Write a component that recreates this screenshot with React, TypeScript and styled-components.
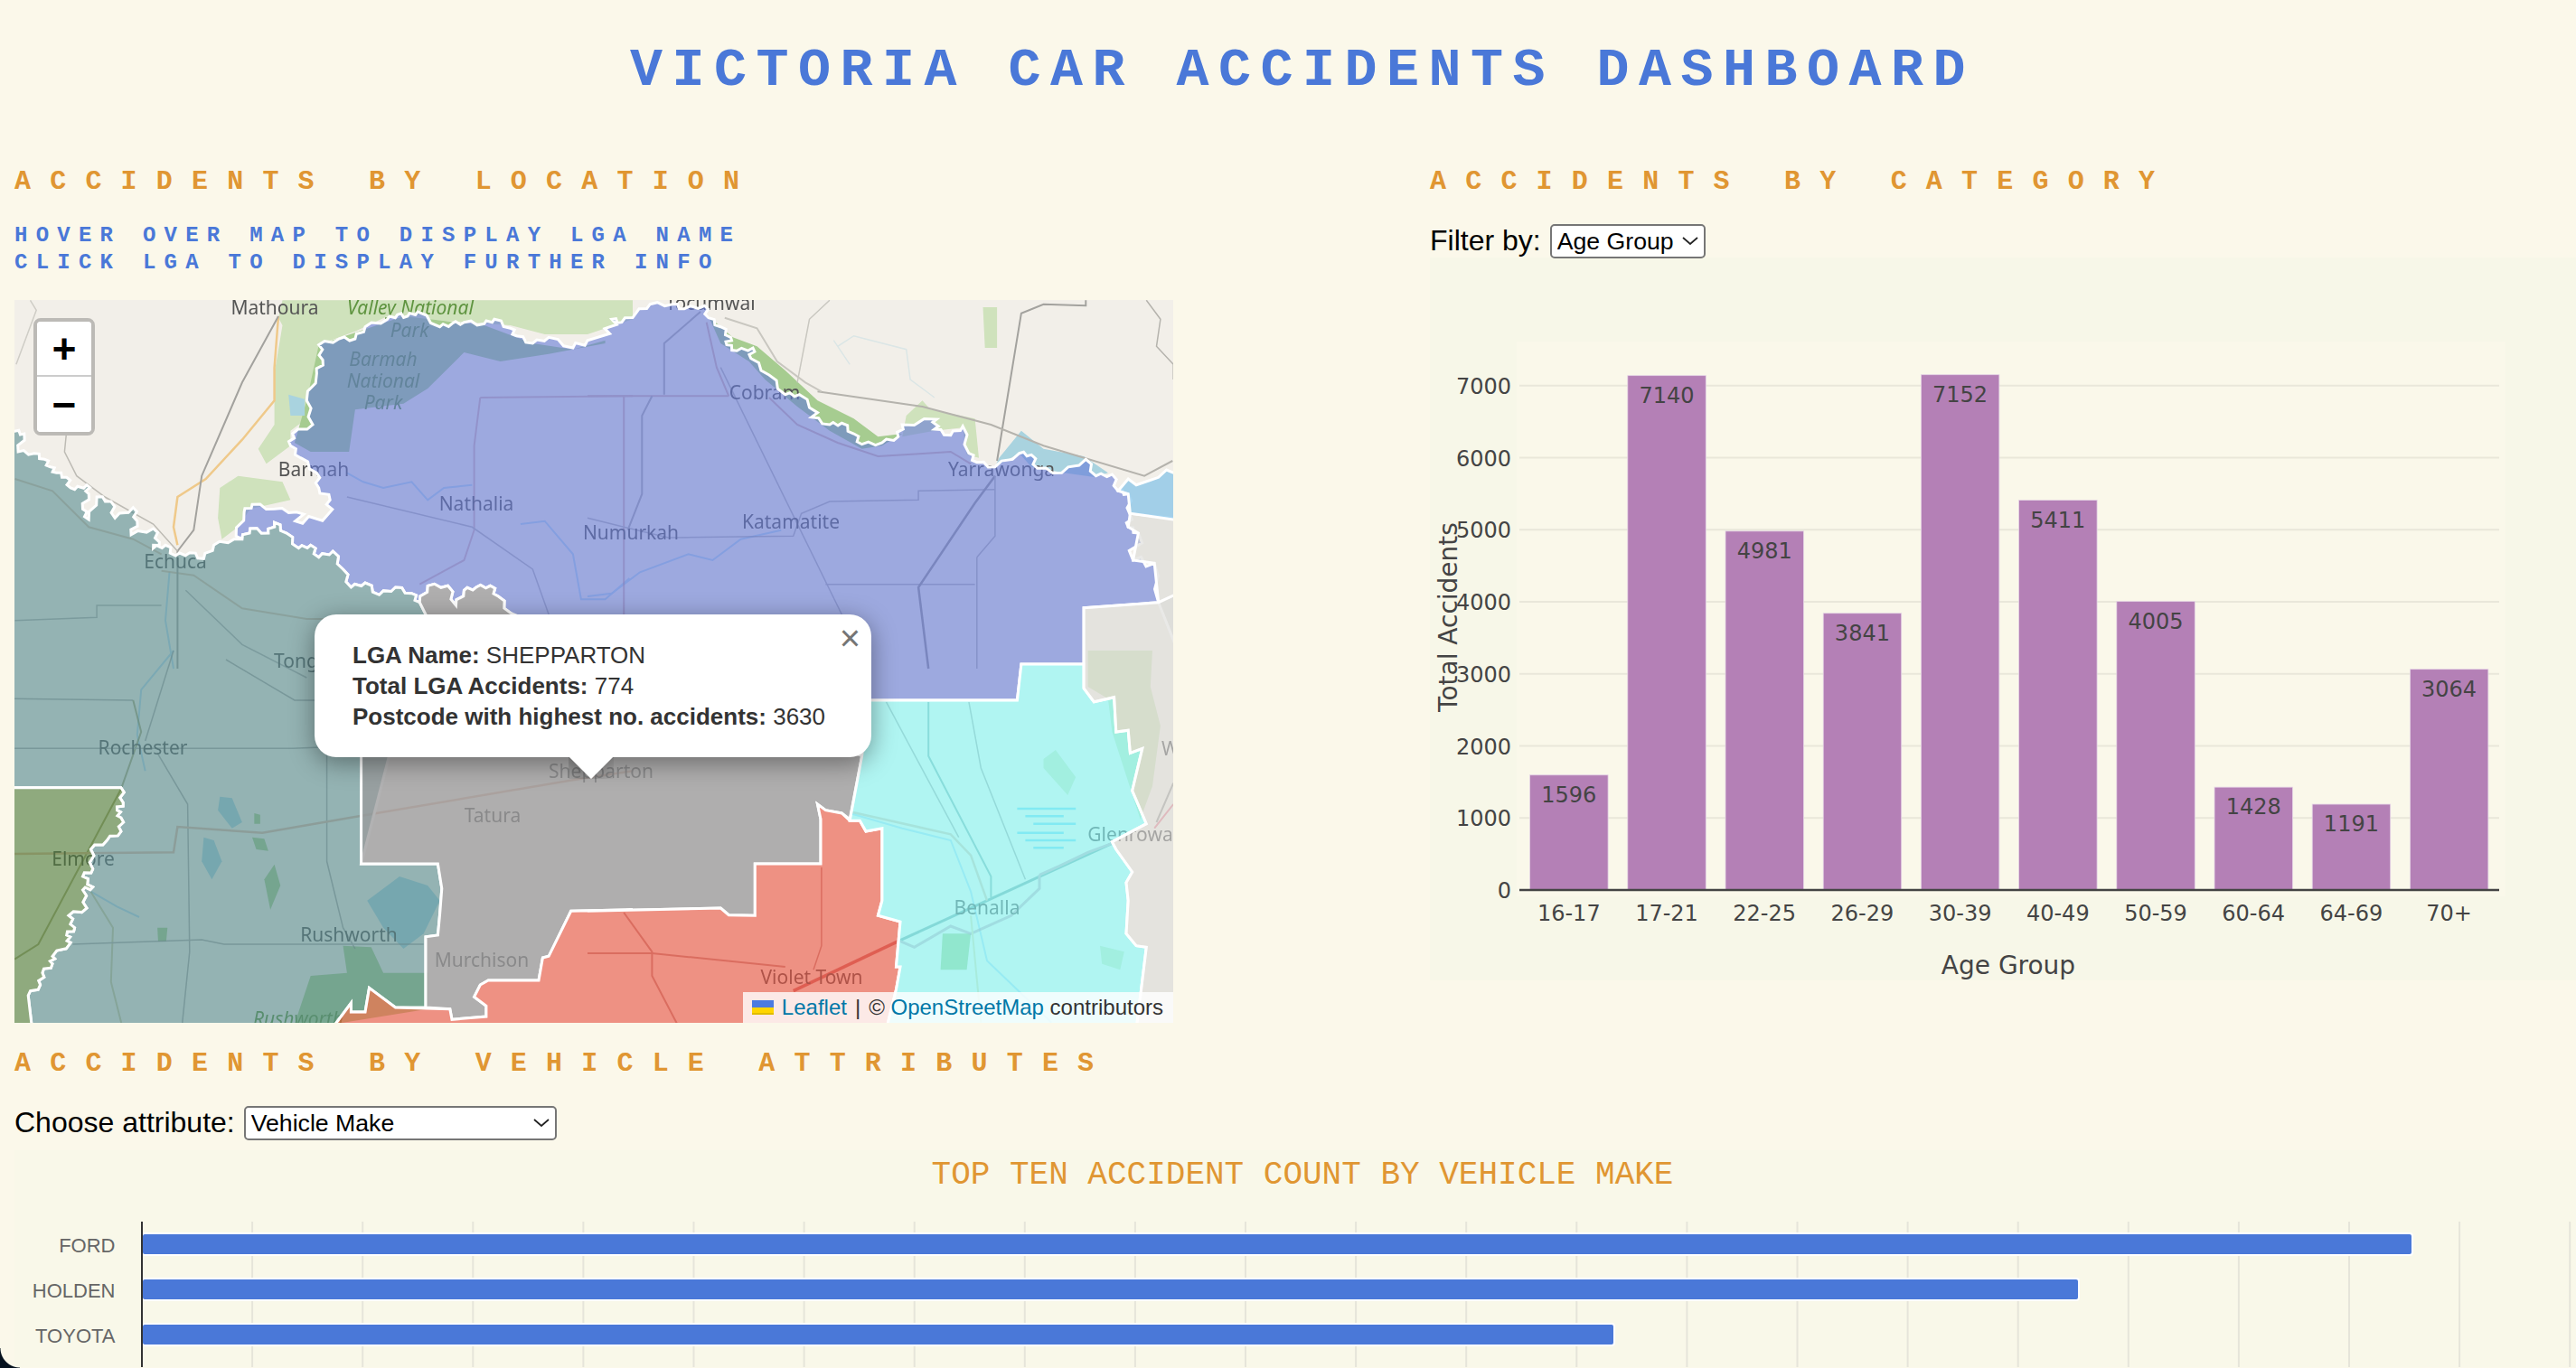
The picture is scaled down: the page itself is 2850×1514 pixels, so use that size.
import styled, { createGlobalStyle } from "styled-components";

type Frame = [number, number];

// trace frames: points below were read off crops of the map, each with its own origin
const TL: Frame = [0, 320];
const TR: Frame = [650, 320];
const BL: Frame = [0, 720];
const BR: Frame = [650, 720];

const toPoints = (f: Frame, a: number[]) => {
  const out: string[] = [];
  for (let i = 0; i < a.length; i += 2) {
    out.push(`${(f[0] + a[i] / 2.24).toFixed(1)},${(f[1] + a[i + 1] / 3).toFixed(1)}`);
  }
  return out;
};

const trace = (...parts: [Frame, number[]][]) =>
  parts.flatMap(([f, a]) => toPoints(f, a)).join(" ");

// river borders are fine zigzags: the kinks depend only on the segment, so shared borders still line up
const jag = (a: number[]) => {
  const out: number[] = [];
  for (let i = 0; i < a.length - 2; i += 2) {
    const flip = a[i] > a[i + 2] || (a[i] === a[i + 2] && a[i + 1] > a[i + 3]);
    const [x1, y1, x2, y2] = flip ? [a[i + 2], a[i + 3], a[i], a[i + 1]] : [a[i], a[i + 1], a[i + 2], a[i + 3]];
    const hash = Math.abs(x1 * 7 + y1 * 13 + x2 * 17 + y2 * 3) % 5;
    const amp = (hash % 2 ? 1 : -1) * (6 + hash * 2);
    const len = Math.hypot(x2 - x1, y2 - y1) || 1;
    const nx = -((y2 - y1) / len) * amp;
    const ny = ((x2 - x1) / len) * amp;
    const at = (t: number, s: number) => [x1 + (x2 - x1) * t + nx * s, y1 + (y2 - y1) * t + ny * s];
    out.push(a[i], a[i + 1]);
    if (len > 24) {
      const kinks = [at(0.33, 1), at(0.66, -1)];
      (flip ? kinks.reverse() : kinks).forEach((k) => out.push(k[0], k[1]));
    }
  }
  out.push(a[a.length - 2], a[a.length - 1]);
  return out;
};

const rev = (a: number[]) => {
  const out: number[] = [];
  for (let i = a.length - 2; i >= 0; i -= 2) out.push(a[i], a[i + 1]);
  return out;
};

const riverWest = jag([
  -10, 472, 37, 472, 60, 480, 45, 540, 85, 545, 110, 565, 125, 590, 140, 610, 165, 625, 175, 660, 185, 665, 215, 650, 220, 680, 205, 730, 220,
  765, 240, 690, 275, 705, 285, 760, 330, 725, 340, 770, 325, 815, 380, 795, 395, 840, 380, 860, 410, 850, 435, 885, 470, 875, 505, 895,
  530, 850, 580, 830,
]);
const riverMid = jag([
  600, 830, 620, 795, 665, 810, 680, 775, 710, 810, 740, 860, 770, 850, 790, 890, 825, 870, 850, 930, 870, 990, 905, 975, 940, 1015, 980,
  990, 1020, 1010, 1040, 1040,
]);
const grayTop = jag([1040, 1040, 1060, 985, 1110, 985, 1130, 1050, 1150, 1000, 1180, 990, 1215, 985, 1235, 1020, 1265, 1075]);
const olive = jag([
  300, 455, 305, 505, 290, 530, 300, 555, 300, 600, 265, 630, 225, 660, 230, 725, 205, 750, 230, 785, 205, 795, 215, 855, 170, 880, 185, 920, 165,
  945, 175, 970, 130, 1015, 130, 1040, 105, 1070, 100, 1110, 70, 1145,
]).concat([80, 1260]);
const grayBelow = [
  1568, 860, 1415, 865, 1360, 1015, 1345, 1020, 1335, 1095, 1210, 1095, 1190, 1110, 1175, 1150, 1205, 1180, 1205, 1215, 1120, 1225, 1115,
  1190, 1055, 1185,
];
const grayEast = [
  680, 350, 650, 560, 630, 540, 590, 530, 570, 510, 578, 560, 578, 708, 415, 708, 415, 880, 350, 878, 330, 855, 0, 865,
];
const grayWest = [1055, 950, 1085, 945, 1090, 875, 1095, 790, 1085, 708, 895, 708, 895, 350];

const regions = [
  {
    key: "moira",
    fill: "#647ad8",
    points: trace(
      [
        TL,
        jag([
          585, 820, 605, 740, 625, 715, 680, 730, 735, 740, 750, 778, 815, 745, 818, 700, 790, 660, 785, 610, 745, 560, 720, 520, 725, 480, 775, 450, 760,
          370, 785, 280, 800, 235, 790, 185, 840, 165, 880, 165, 905, 125, 960, 100, 985, 85, 1010, 90, 1035, 75, 1090, 125, 1120, 115, 1150, 110, 1200, 115,
          1225, 100, 1265, 130, 1280, 155, 1320, 180, 1360, 160, 1420, 195, 1456, 170,
        ]),
      ],
      [
        TR,
        jag([
          55, 148, 60, 100, 85, 110, 120, 80, 155, 50, 210, 50, 240, 65, 290, 55, 300, 95, 330, 125, 355, 160, 345, 185, 370, 205, 410, 195, 405, 230, 450,
          285, 490, 350, 525, 350, 570, 410, 555, 425, 600, 450, 630, 445, 660, 480, 680, 515, 730, 510, 770, 490, 780, 450, 865, 432, 860, 465, 900, 485,
          930, 455, 945, 545, 965, 575, 1010, 590, 1070, 545, 1100, 550, 1115, 595, 1175, 610, 1235, 565, 1260, 620, 1300, 615, 1315, 670, 1340, 680, 1345,
          750, 1340, 790, 1365, 810, 1352, 900, 1405, 910, 1415, 1040,
        ]).concat([1230, 1058]),
      ],
      [BR, [1230, 45, 1075, 45, 1065, 165, 700, 165, 100, 165]],
      [TL, rev(grayTop)],
      [TL, rev(riverMid)],
    ),
  },
  {
    key: "campaspe",
    fill: "#558b8f",
    points: trace(
      [TL, riverWest],
      [TL, riverMid],
      [TL, [1055, 1080]],
      [BL, [895, 708, 1085, 708, 1095, 790, 1090, 875, 1085, 945, 1055, 950, 1055, 1185, 980, 1185, 915, 1120, 905, 1200, 870, 1200, 870, 1170, 820, 1260]],
      [BL, rev(olive)],
      [BL, [-10, 455]],
    ),
  },
  { key: "loddon", fill: "#4d7c37", points: trace([BL, [-10, 455]], [BL, olive], [BL, [-10, 1260]]) },
  {
    key: "shepparton",
    fill: "#9a9a9b",
    opacity: 0.76,
    points: trace([TL, grayTop], [BR, grayEast], [BL, grayBelow], [BL, grayWest], [TL, [1055, 1080]]),
  },
  {
    key: "strathbogie",
    fill: "#eb5140",
    points: trace(
      [BL, [820, 1260, 870, 1170, 870, 1200, 905, 1200, 915, 1120, 980, 1185, 1115, 1190, 1120, 1225, 1205, 1215, 1205, 1180, 1175, 1150, 1190, 1110, 1210, 1095,
        1335, 1095, 1345, 1020, 1360, 1015, 1415, 865, 1568, 860]],
      [BR, [0, 865, 330, 855, 350, 878, 415, 880, 415, 708, 578, 708, 578, 560, 570, 510, 590, 530, 630, 540, 650, 565, 675, 565, 690, 600, 730, 590, 730, 830, 720, 880,
        775, 900, 765, 1050, 775, 1050, 765, 1125, 740, 1260]],
    ),
  },
  {
    key: "benalla",
    fill: "#84f9f8",
    points: trace([
      BR,
      [
        700, 165, 690, 250, 680, 350, 650, 565, 675, 565, 690, 600, 730, 590, 730, 830, 720, 880, 775, 900, 765, 1050, 775, 1050, 765, 1125, 740, 1260, 1360, 1260,
        1385, 985, 1360, 980, 1335, 940, 1340, 830, 1335, 770, 1350, 735, 1310, 660, 1300, 635, 1385, 575, 1350, 465, 1375, 325, 1345, 340, 1340, 265, 1310, 270,
        1305, 155, 1255, 170, 1230, 125, 1230, 45, 1075, 45, 1065, 165,
      ],
    ]),
  },
  {
    key: "wangaratta",
    fill: "#dadad7",
    points: trace([TR, [1345, 745, 1480, 765, 1480, 1260, 1415, 1040, 1405, 910, 1352, 900, 1365, 810, 1340, 790]]),
  },
  {
    key: "wangaratta-south",
    fill: "#dadad7",
    points: trace(
      [TR, [1230, 1058, 1415, 1040, 1480, 1000]],
      [BR, [1480, 1260, 1360, 1260, 1385, 985, 1360, 980, 1335, 940, 1340, 830, 1335, 770, 1350, 735, 1310, 660, 1300, 635, 1385, 575, 1350, 465, 1375, 325, 1345, 340,
        1340, 265, 1310, 270, 1305, 155, 1255, 170, 1230, 125]],
    ),
  },
  {
    key: "indigo",
    fill: "#6db9e8",
    points: trace([TR, [1315, 670, 1340, 630, 1360, 650, 1415, 625, 1435, 600, 1480, 625, 1480, 770, 1345, 745, 1340, 680]]),
  },
];

const paleParks = [
  trace([TL, [690, 95, 700, 37, 1568, 37, 1568, 100, 1456, 150, 1350, 150, 1265, 120, 1100, 105, 960, 90, 880, 140, 800, 180, 770, 330, 760, 430, 720, 470, 720, 520, 660, 580, 640, 530, 680, 450, 680, 280, 700, 120]]),
  trace([TL, [545, 660, 590, 620, 700, 640, 720, 700, 620, 730, 590, 790, 550, 830, 540, 760]]),
  trace([BR, [1240, 0, 1400, 0, 1395, 120, 1420, 250, 1400, 450, 1370, 560, 1300, 270, 1290, 160, 1240, 120]]),
  trace([TR, [980, 60, 1015, 60, 1015, 195, 985, 195]]),
  trace([TR, [790, 420, 830, 370, 850, 400, 960, 430, 970, 560, 940, 550, 930, 460, 860, 470, 780, 490]]),
  trace([BR, [1130, 360, 1160, 330, 1210, 420, 1190, 480, 1130, 390]]),
  trace([BR, [1270, 980, 1330, 1000, 1320, 1060, 1275, 1040]]),
];

const deepParks = [
  trace([TL, [790, 185, 1000, 90, 1200, 120, 1320, 180, 1420, 200, 1500, 170, 1500, 180, 1360, 215, 1240, 240, 1150, 210, 1060, 330, 1000, 380, 880, 400, 865, 540, 770, 540, 730, 510, 760, 370]]),
  trace([TR, [300, 90, 360, 160, 420, 190, 490, 270, 570, 370, 660, 430, 720, 490, 780, 480, 730, 520, 680, 530, 600, 470, 520, 390, 440, 300, 400, 240, 330, 180]]),
  trace([BL, [770, 1080, 860, 1070, 850, 980, 920, 985, 950, 1070, 1060, 1070, 1060, 1190, 830, 1240, 730, 1240]]),
  trace([BL, [655, 760, 680, 710, 695, 780, 670, 860]]),
  trace([BL, [630, 540, 645, 545, 645, 575, 630, 575]]),
  trace([BL, [625, 620, 655, 625, 665, 665, 635, 660]]),
  trace([BL, [390, 920, 415, 920, 412, 965, 392, 965]]),
  trace([BR, [880, 940, 950, 940, 940, 1060, 875, 1060]]),
];

const waters = [
  trace([TR, [1020, 560, 1075, 470, 1130, 530, 1230, 555, 1290, 610, 1260, 625, 1180, 610, 1100, 590, 1070, 545, 1010, 590]]),
  trace([TL, [715, 350, 755, 365, 755, 420, 720, 420]]),
  trace([BL, [910, 830, 990, 750, 1060, 780, 1090, 830, 1050, 940, 1000, 990, 950, 920]]),
  trace([BL, [545, 485, 575, 490, 600, 570, 575, 590, 540, 530]]),
  trace([BL, [505, 620, 530, 630, 550, 700, 525, 760, 500, 700]]),
];

const hatch = [525, 550, 575, 605, 630, 655].map((y, i) =>
  trace([BR, [1065 + (i % 3) * 20, y, 1210 - (i % 2) * 30, y]]),
);

const roads: { pts: string; color: string; w?: number }[] = [
  { pts: trace([TL, [37, 630, 130, 670, 220, 790, 330, 830, 400, 880]]), color: "#c9a98c", w: 2 },
  { pts: trace([TL, [37, 1100, 240, 1090, 240, 1050, 400, 1050]]), color: "#8d8d8d", w: 1.5 },
  { pts: trace([TL, [400, 935, 480, 950, 600, 1060, 760, 1095, 880, 1095]]), color: "#c9a98c", w: 2 },
  { pts: trace([TL, [460, 1000, 600, 1180, 760, 1290]]), color: "#8d8d8d", w: 1.5 },
  { pts: trace([TL, [1190, 360, 1568, 355]]), color: "#c79393", w: 2 },
  { pts: trace([TR, [0, 355, 350, 355]]), color: "#c08a8a", w: 2 },
  { pts: trace([TR, [90, 355, 90, 1080]]), color: "#c08a8a", w: 2 },
  { pts: trace([TR, [295, 110, 320, 260, 350, 355]]), color: "#c08a8a", w: 2 },
  { pts: trace([TR, [450, 360, 520, 450, 620, 510, 720, 555, 900, 540, 950, 580]]), color: "#c08a8a", w: 2 },
  { pts: trace([TR, [190, 350, 190, 180, 280, 75]]), color: "#808080", w: 2 },
  { pts: trace([TR, [160, 355, 135, 420, 135, 680, 100, 800]]), color: "#808080", w: 2 },
  { pts: trace([TR, [330, 260, 630, 1080]]), color: "#909090", w: 1.5 },
  { pts: trace([TR, [0, 760, 90, 790, 200, 825, 510, 820, 530, 745, 600, 705, 820, 700, 820, 670, 1010, 665]]), color: "#909090", w: 1.5 },
  { pts: trace([TR, [590, 980, 960, 980]]), color: "#909090", w: 1.5 },
  { pts: trace([TR, [1010, 620, 960, 710, 820, 990, 845, 1260]]), color: "#606060", w: 2.5 },
  { pts: trace([TR, [965, 890, 965, 1260]]), color: "#909090", w: 1.5 },
  { pts: trace([TR, [965, 890, 1010, 820, 1010, 620]]), color: "#909090", w: 1.5 },
  { pts: trace([TL, [1190, 360, 1175, 520, 1175, 800, 1150, 900, 1040, 980]]), color: "#c79393", w: 2 },
  { pts: trace([TL, [860, 690, 1170, 790, 1320, 930, 1360, 1080]]), color: "#909090", w: 1.5 },
  { pts: trace([BL, [36, 160, 330, 165]]), color: "#808080", w: 1.5 },
  { pts: trace([BL, [330, 165, 350, 270, 300, 460, 95, 975, 36, 1025]]), color: "#7d7d40", w: 2 },
  { pts: trace([BL, [430, 0, 360, 300]]), color: "#808080", w: 1.5 },
  { pts: trace([BL, [560, 30, 730, 165, 890, 165]]), color: "#808080", w: 1.5 },
  { pts: trace([BL, [36, 325, 460, 325, 725, 325, 810, 320, 895, 320]]), color: "#808080", w: 1.5 },
  { pts: trace([BL, [390, 340, 465, 510, 470, 1000, 450, 1260]]), color: "#808080", w: 1.5 },
  { pts: trace([BL, [810, 320, 810, 700, 850, 920, 880, 990]]), color: "#808080", w: 1.5 },
  { pts: trace([BL, [36, 675, 430, 670, 440, 585, 650, 605, 890, 550, 1420, 430, 1568, 400]]), color: "#d0957e", w: 2.5 },
  { pts: trace([BL, [225, 800, 280, 920, 275, 1100, 305, 1260]]), color: "#b5b37a", w: 2 },
  { pts: trace([BL, [180, 975, 500, 960, 555, 975, 1050, 975]]), color: "#808080", w: 1.5 },
  { pts: trace([BR, [0, 1005, 160, 1005, 490, 1050]]), color: "#a05a55", w: 2 },
  { pts: trace([BR, [90, 870, 160, 1000, 160, 1080, 230, 1260]]), color: "#a05a55", w: 2 },
  { pts: trace([BR, [580, 720, 580, 980, 560, 1060]]), color: "#a05a55", w: 1.5 },
  { pts: trace([BR, [510, 1130, 770, 965]]), color: "#b42020", w: 3.5 },
  { pts: trace([BR, [770, 965, 1300, 640]]), color: "#3f7f7f", w: 3 },
  { pts: trace([BR, [775, 965, 810, 985, 900, 915, 950, 940, 1050, 880, 1120, 790, 1120, 745]]), color: "#b08ea0", w: 3 },
  { pts: trace([BR, [1120, 745, 1170, 715, 1240, 670, 1300, 640]]), color: "#b08ea0", w: 3 },
  { pts: trace([BR, [650, 535, 900, 610, 950, 680, 990, 830]]), color: "#c9a98c", w: 2.5 },
  { pts: trace([BR, [740, 170, 920, 620]]), color: "#808080", w: 1.5 },
  { pts: trace([BR, [845, 170, 845, 350, 1000, 750, 1000, 820]]), color: "#4f8a8a", w: 2 },
  { pts: trace([BR, [945, 170, 975, 390, 1085, 760]]), color: "#808080", w: 1.5 },
  { pts: trace([BR, [950, 880, 975, 1235]]), color: "#d3c98c", w: 2 },
];

const landRoads: { pts: string; color: string; w?: number }[] = [
  { pts: trace([TL, [690, 90, 680, 260, 680, 370, 600, 500, 510, 630, 440, 690, 430, 790, 440, 850]]), color: "#efc98a", w: 2.5 },
  { pts: trace([TL, [690, 90, 600, 310, 500, 620, 480, 800, 440, 870, 440, 1260]]), color: "#a3a29e", w: 2 },
  { pts: trace([TL, [40, 250, 90, 70, 75, 37]]), color: "#cfcdc6", w: 1.5 },
  { pts: trace([TL, [165, 470, 160, 540, 190, 620, 260, 690, 380, 780, 440, 870]]), color: "#bdbbb4", w: 1.5 },
  { pts: trace([TR, [1015, 570, 1075, 80, 1130, 50, 1235, 55, 1235, 37]]), color: "#a3a29e", w: 2 },
  { pts: trace([TR, [570, 340, 830, 390, 1000, 450, 1130, 520, 1380, 620, 1450, 570]]), color: "#b5b3ad", w: 2 },
  { pts: trace([TR, [600, 37, 550, 100, 520, 310]]), color: "#c9c7c0", w: 1.5 },
  { pts: trace([TR, [340, 95, 420, 130, 470, 240, 540, 310, 580, 340]]), color: "#c9c7c0", w: 2 },
  { pts: trace([TR, [1385, 37, 1420, 100, 1410, 190, 1452, 250, 1452, 300]]), color: "#b5b3ad", w: 1.5 },
  { pts: trace([TR, [610, 170, 650, 250, 620, 190, 660, 155, 790, 200, 800, 300, 860, 360]]), color: "#dbe6e6", w: 1.5 },
  { pts: trace([BR, [1410, 570, 1452, 440]]), color: "#a3a29e", w: 2 },
  { pts: trace([BR, [1405, 590, 1452, 510]]), color: "#e58a98", w: 2 },
];

const rivers = [
  trace([TL, [860, 610, 900, 640, 950, 660, 1020, 640, 1060, 700, 1100, 660, 1170, 650]]),
  trace([TL, [1290, 780, 1350, 770, 1420, 880, 1440, 1030, 1500, 1030, 1560, 960]]),
  trace([TR, [0, 1020, 60, 1010, 130, 940, 250, 880, 310, 900, 380, 830, 480, 800]]),
  trace([TL, [420, 940, 410, 1100, 430, 1260]]),
  trace([BL, [430, 0, 350, 130, 340, 280, 360, 400]]),
  trace([BL, [225, 800, 290, 850, 345, 885]]),
  trace([BR, [650, 540, 780, 590, 900, 630, 950, 800, 990, 1030, 1150, 1235]]),
];

type PlaceProps = { x: number; y: number; t: string; anchor?: string; park?: boolean };
const places: PlaceProps[] = [
  { x: 304, y: 348, t: "Mathoura" },
  { x: 454, y: 348, t: "Valley National", park: true },
  { x: 453, y: 373, t: "Park", park: true },
  { x: 424, y: 405, t: "Barmah", park: true },
  { x: 424, y: 429, t: "National", park: true },
  { x: 424, y: 453, t: "Park", park: true },
  { x: 347, y: 527, t: "Barmah" },
  { x: 527, y: 565, t: "Nathalia" },
  { x: 698, y: 597, t: "Numurkah" },
  { x: 875, y: 585, t: "Katamatite" },
  { x: 846, y: 442, t: "Cobram" },
  { x: 1108, y: 527, t: "Yarrawonga" },
  { x: 786, y: 343, t: "Tocumwal" },
  { x: 194, y: 629, t: "Echuca" },
  { x: 303, y: 739, t: "Tongala", anchor: "start" },
  { x: 158, y: 835, t: "Rochester" },
  { x: 92, y: 958, t: "Elmore" },
  { x: 386, y: 1042, t: "Rushworth" },
  { x: 330, y: 1135, t: "Rushworth", park: true },
  { x: 545, y: 910, t: "Tatura" },
  { x: 665, y: 861, t: "Shepparton" },
  { x: 533, y: 1070, t: "Murchison" },
  { x: 898, y: 1089, t: "Violet Town" },
  { x: 1092, y: 1012, t: "Benalla" },
  { x: 1257, y: 931, t: "Glenrowan" },
  { x: 1285, y: 836, t: "Wangaratta", anchor: "start" },
];

const ageGroups = [
  { label: "16-17", total: 1596 },
  { label: "17-21", total: 7140 },
  { label: "22-25", total: 4981 },
  { label: "26-29", total: 3841 },
  { label: "30-39", total: 7152 },
  { label: "40-49", total: 5411 },
  { label: "50-59", total: 4005 },
  { label: "60-64", total: 1428 },
  { label: "64-69", total: 1191 },
  { label: "70+", total: 3064 },
];

const makes = [
  { label: "FORD", end: 2669 },
  { label: "HOLDEN", end: 2300 },
  { label: "TOYOTA", end: 1786 },
];

const GlobalStyle = createGlobalStyle`
  html, body {
    margin: 0;
    padding: 0;
    background: #fbf8ea;
  }
`;

const Page = styled.div`
  position: relative;
  box-sizing: border-box;
  width: 2850px;
  height: 1514px;
  overflow: hidden;
  padding-left: 16px;
  background: #fbf8ea;
  font-family: "Liberation Sans", Arial, sans-serif;
`;

const Title = styled.h1`
  margin: 0;
  padding: 48px 0 0 16px;
  height: 186px;
  box-sizing: border-box;
  text-align: center;
  font-family: "Liberation Mono", "Courier New", monospace;
  font-size: 60px;
  line-height: 60px;
  font-weight: 700;
  letter-spacing: 10.5px;
  color: #4a78d8;
`;

const TopRow = styled.div`
  display: grid;
  grid-template-columns: 1566px 1fr;
  height: 946px;
`;

const Column = styled.section`
  display: flex;
  flex-direction: column;
  min-width: 0;
`;

const Heading = styled.h2`
  margin: 0;
  height: 30px;
  font-family: "Liberation Mono", "Courier New", monospace;
  font-size: 30px;
  line-height: 30px;
  font-weight: 700;
  letter-spacing: 21.2px;
  white-space: nowrap;
  color: #e09632;
`;

const Hint = styled.p`
  margin: 30px 0 26px;
  font-family: "Liberation Mono", "Courier New", monospace;
  font-size: 24px;
  line-height: 30px;
  font-weight: 700;
  letter-spacing: 9.25px;
  color: #4a78d8;
`;

const MapBox = styled.div`
  position: relative;
  width: 1282px;
  height: 800px;
  overflow: hidden;
  background: #f2efe9;
`;

const MapSvg = styled.svg`
  display: block;
`;

const PlaceName = styled.text<{ $park?: boolean }>`
  font-family: "Noto Sans", "DejaVu Sans", sans-serif;
  font-size: 21px;
  font-style: ${(p) => (p.$park ? "italic" : "normal")};
  fill: ${(p) => (p.$park ? "#5f9440" : "#555555")};
`;

const ZoomControl = styled.div`
  position: absolute;
  left: 21px;
  top: 20px;
  width: 60px;
  border: 4px solid #bcbab6;
  border-radius: 8px;
  background: #fff;
  overflow: hidden;
`;

const ZoomButton = styled.div<{ $first?: boolean }>`
  height: 61px;
  box-sizing: border-box;
  padding-top: 9px;
  display: flex;
  align-items: center;
  justify-content: center;
  font-family: "Liberation Mono", monospace;
  font-size: 46px;
  font-weight: 700;
  color: #000;
  background: #fff;
  border-bottom: ${(p) => (p.$first ? "2px solid #ccc" : "none")};
`;

const Popup = styled.div`
  position: absolute;
  left: 332px;
  top: 348px;
  width: 616px;
  height: 158px;
  box-sizing: border-box;
  padding: 28px 0 0 42px;
  background: #fff;
  border-radius: 24px;
  box-shadow: 0 6px 28px rgba(0, 0, 0, 0.4);
  font-size: 26px;
  line-height: 34px;
  color: #333;
  white-space: nowrap;
`;

const PopupTip = styled.div`
  position: absolute;
  left: 281px;
  top: 158px;
  width: 50px;
  height: 24px;
  overflow: hidden;

  &::after {
    content: "";
    position: absolute;
    left: 8px;
    top: -17px;
    width: 34px;
    height: 34px;
    background: #fff;
    transform: rotate(45deg);
    box-shadow: 0 6px 28px rgba(0, 0, 0, 0.4);
  }
`;

const PopupClose = styled.span`
  position: absolute;
  right: 12px;
  top: 3px;
  font-size: 40px;
  line-height: 46px;
  color: #757575;
`;

const Attribution = styled.div`
  position: absolute;
  right: 0;
  bottom: 0;
  height: 34px;
  box-sizing: border-box;
  padding: 0 11px 0 10px;
  display: flex;
  align-items: center;
  gap: 9px;
  background: rgba(255, 255, 255, 0.8);
  font-size: 24px;
  color: #333;
  white-space: nowrap;
`;

const AttrLink = styled.a`
  color: #0078a8;
  text-decoration: none;
`;

const FlagIcon = styled.svg`
  display: block;
  flex: none;
`;

const FilterRow = styled.div<{ $top: number }>`
  display: flex;
  align-items: center;
  gap: 10px;
  margin-top: ${(p) => p.$top}px;
  height: 38px;
  font-size: 32px;
  color: #000;
`;

const SelectBox = styled.div<{ $width: number }>`
  position: relative;
  width: ${(p) => p.$width}px;
  height: 38px;
`;

const Dropdown = styled.select`
  appearance: none;
  width: 100%;
  height: 100%;
  box-sizing: border-box;
  padding: 0 0 0 6px;
  border: 2px solid #767676;
  border-radius: 5px;
  background: #fff;
  font-family: "Liberation Sans", Arial, sans-serif;
  font-size: 26.67px;
  color: #000;
`;

const Chevron = styled.svg`
  position: absolute;
  right: 8px;
  top: 15px;
  pointer-events: none;
`;

const ChartPanel = styled.div`
  width: 1268px;
  height: 800px;
  background: #f7f7e8;
`;

const ChartSvg = styled.svg`
  display: block;
`;

const ChartText = styled.text<{ $size?: number }>`
  font-family: "DejaVu Sans", Verdana, sans-serif;
  font-size: ${(p) => p.$size ?? 24}px;
  fill: #444;
`;

const VehicleSection = styled.section`
  margin-top: 30px;
`;

const VehiclePanel = styled.div`
  margin-top: 12px;
  background: #f9f8e9;
`;

const ChartTitle = styled.h3`
  margin: 0;
  height: 79px;
  padding-top: 10px;
  box-sizing: border-box;
  text-align: center;
  padding-left: 16px;
  font-family: "Liberation Mono", "Courier New", monospace;
  font-size: 36px;
  line-height: 36px;
  font-weight: 400;
  white-space: nowrap;
  color: #e09632;
`;

const MakeLabel = styled.text`
  font-family: "Liberation Sans", Arial, sans-serif;
  font-size: 22px;
  fill: #666;
`;

const WindowCorner = styled.div`
  position: absolute;
  left: 0;
  bottom: 0;
  width: 22px;
  height: 22px;
  background: radial-gradient(circle at 100% 0, transparent 21px, #06121f 22px);
`;

const SelectField = ({ width, value }: { width: number; value: string }) => (
  <SelectBox $width={width}>
    <Dropdown defaultValue={value} aria-label={value}>
      <option>{value}</option>
    </Dropdown>
    <Chevron width="18" height="9" viewBox="0 0 18 9">
      <path d="M1 1l8 7 8-7" fill="none" stroke="#222" strokeWidth="1.8" />
    </Chevron>
  </SelectBox>
);

const AccidentMap = () => (
  <MapBox>
    <MapSvg width="1282" height="800" viewBox="16 332 1282 800">
      <defs>
        <filter id="tile-blur" x="0" y="0" width="100%" height="100%">
          <feGaussianBlur stdDeviation="0.7" />
        </filter>
      </defs>
      <rect x="16" y="332" width="1282" height="800" fill="#f2efe9" />
      <g filter="url(#tile-blur)">
        {paleParks.map((p, i) => (
          <polygon key={i} points={p} fill="#cfe2bc" />
        ))}
        {deepParks.map((p, i) => (
          <polygon key={i} points={p} fill="#a6cc90" />
        ))}
        {waters.map((p, i) => (
          <polygon key={i} points={p} fill="#a9d3df" />
        ))}
        {hatch.map((p, i) => (
          <polyline key={i} points={p} fill="none" stroke="#7fd4ea" strokeWidth="2.5" />
        ))}
        {rivers.map((p, i) => (
          <polyline key={i} points={p} fill="none" stroke="#b5d6ea" strokeWidth="2" />
        ))}
        <g opacity="0.6">
          {roads.map((r, i) => (
            <polyline key={i} points={r.pts} fill="none" stroke={r.color} strokeWidth={r.w ?? 2} />
          ))}
        </g>
        {landRoads.map((r, i) => (
          <polyline key={i} points={r.pts} fill="none" stroke={r.color} strokeWidth={r.w ?? 2} />
        ))}
        {places.map((p) => (
          <PlaceName key={p.t + p.x} x={p.x} y={p.y} textAnchor={p.anchor ?? "middle"} $park={p.park}>
            {p.t}
          </PlaceName>
        ))}
      </g>
      {regions.map((r) => (
        <polygon
          key={r.key}
          points={r.points}
          fill={r.fill}
          fillOpacity={r.opacity ?? 0.6}
          stroke="#fff"
          strokeWidth="3"
          strokeLinejoin="miter"
        />
      ))}
    </MapSvg>
    <ZoomControl>
      <ZoomButton $first>+</ZoomButton>
      <ZoomButton>−</ZoomButton>
    </ZoomControl>
    <Popup>
      <PopupClose>×</PopupClose>
      <div>
        <b>LGA Name:</b> SHEPPARTON
      </div>
      <div>
        <b>Total LGA Accidents:</b> 774
      </div>
      <div>
        <b>Postcode with highest no. accidents:</b> 3630
      </div>
      <PopupTip />
    </Popup>
    <Attribution>
      <FlagIcon width="24" height="16" viewBox="0 0 12 8">
        <path fill="#4C7BE1" d="M0 0h12v4H0z" />
        <path fill="#FFD500" d="M0 4h12v3H0z" />
        <path fill="#E0BC00" d="M0 7h12v1H0z" />
      </FlagIcon>
      <AttrLink href="#">Leaflet</AttrLink>
      <span>|</span>
      <span>
        © <AttrLink href="#">OpenStreetMap</AttrLink> contributors
      </span>
    </Attribution>
  </MapBox>
);

const zeroY = 985;
const perThousand = 79.74;
const ageTicks = [0, 1000, 2000, 3000, 4000, 5000, 6000, 7000];

const AgeChart = () => (
  <ChartPanel>
    <ChartSvg width="1268" height="800" viewBox="1582 285 1268 800">
      <rect x="1678" y="378" width="1094" height="614" fill="#faf8ea" />
      {ageTicks.map((t) => {
        const y = zeroY - (t / 1000) * perThousand;
        return (
          <g key={t}>
            {t > 0 && <line x1="1681" x2="2765" y1={y} y2={y} stroke="#e9e7da" strokeWidth="2" />}
            <ChartText x="1672" y={y + 9} textAnchor="end">
              {t}
            </ChartText>
          </g>
        );
      })}
      {ageGroups.map((g, i) => {
        const x = 1692.6 + i * 108.2;
        const top = zeroY - (g.total / 1000) * perThousand;
        return (
          <g key={g.label}>
            <rect x={x} y={top} width="86.5" height={zeroY - top} fill="#b480b6" stroke="#e6d6e7" strokeWidth="0.8" />
            <ChartText x={x + 43.2} y={top + 30} textAnchor="middle">
              {g.total}
            </ChartText>
            <ChartText x={x + 43.2} y="1019" textAnchor="middle">
              {g.label}
            </ChartText>
          </g>
        );
      })}
      <line x1="1681" x2="2765" y1={zeroY} y2={zeroY} stroke="#444" strokeWidth="2.5" />
      <ChartText x="2222" y="1078" textAnchor="middle" $size={28}>
        Age Group
      </ChartText>
      <ChartText transform="translate(1612 683) rotate(-90)" textAnchor="middle" $size={28}>
        Total Accidents
      </ChartText>
    </ChartSvg>
  </ChartPanel>
);

const gridXs = Array.from({ length: 22 }, (_, i) => 157 + (i + 1) * 122.1);

const MakeChart = () => (
  <ChartSvg width="2834" height="161" viewBox="16 1353 2834 161">
    {gridXs.map((x) => (
      <line key={x} x1={x} x2={x} y1="1353" y2="1514" stroke="#e6e5da" strokeWidth="2" />
    ))}
    {makes.map((m, i) => {
      const y = 1367 + i * 50;
      return (
        <g key={m.label}>
          <rect x="157" y={y - 1} width={m.end - 157} height="24" rx="3" fill="#4a78d8" stroke="#fff" strokeWidth="2" />
          <MakeLabel x="127.5" y={y + 20} textAnchor="end">
            {m.label}
          </MakeLabel>
        </g>
      );
    })}
    <line x1="157" x2="157" y1="1353" y2="1514" stroke="#333" strokeWidth="2" />
  </ChartSvg>
);

export default function App() {
  return (
    <Page>
      <GlobalStyle />
      <Title>VICTORIA CAR ACCIDENTS DASHBOARD</Title>
      <TopRow>
        <Column>
          <Heading>ACCIDENTS BY LOCATION</Heading>
          <Hint>
            HOVER OVER MAP TO DISPLAY LGA NAME
            <br />
            CLICK LGA TO DISPLAY FURTHER INFO
          </Hint>
          <AccidentMap />
        </Column>
        <Column>
          <Heading>ACCIDENTS BY CATEGORY</Heading>
          <FilterRow $top={31}>
            <span>Filter by:</span>
            <SelectField width={172} value="Age Group" />
          </FilterRow>
          <AgeChart />
        </Column>
      </TopRow>
      <VehicleSection>
        <Heading>ACCIDENTS BY VEHICLE ATTRIBUTES</Heading>
        <FilterRow $top={31}>
          <span>Choose attribute:</span>
          <SelectField width={346} value="Vehicle Make" />
        </FilterRow>
        <VehiclePanel>
          <ChartTitle>TOP TEN ACCIDENT COUNT BY VEHICLE MAKE</ChartTitle>
          <MakeChart />
        </VehiclePanel>
      </VehicleSection>
      <WindowCorner />
    </Page>
  );
}
